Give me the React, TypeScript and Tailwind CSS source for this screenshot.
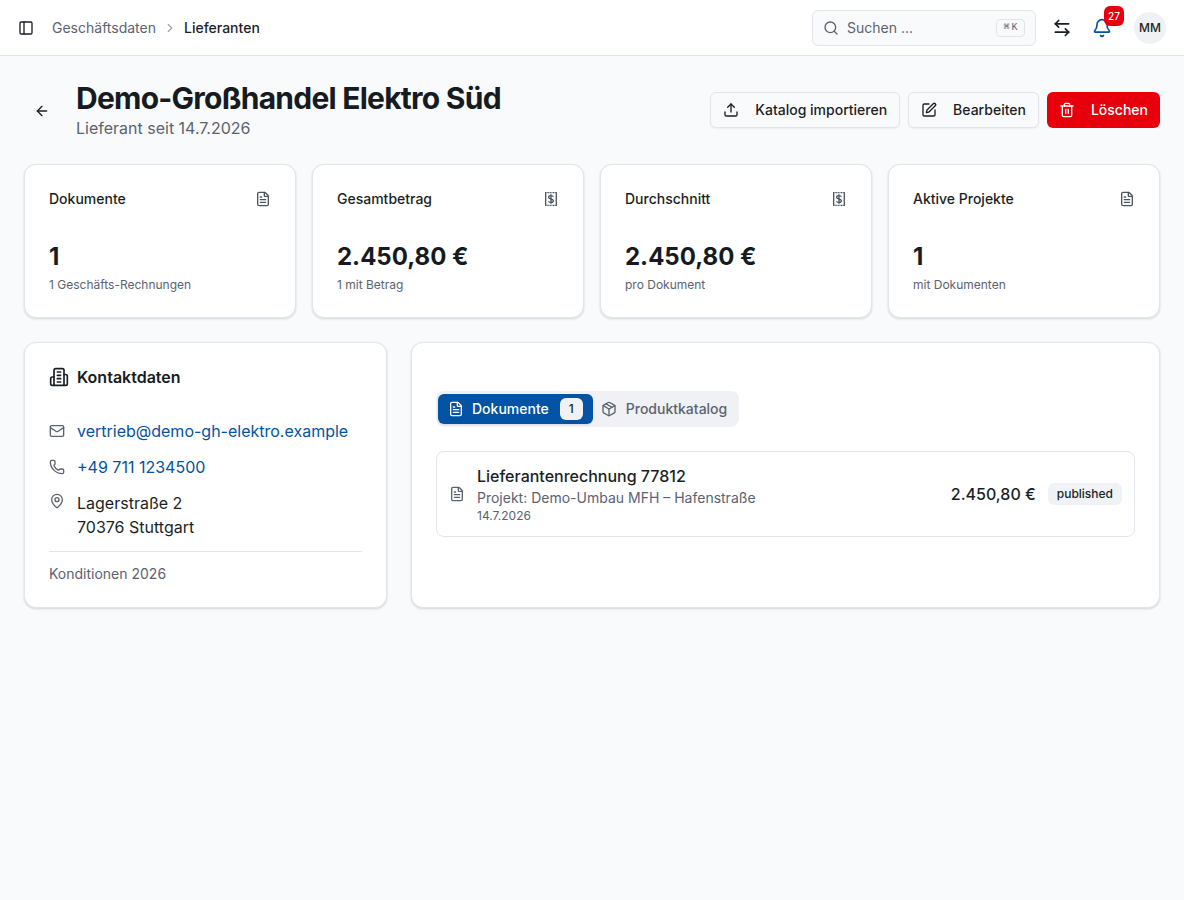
import React from "react";
import { PanelLeft, ChevronRight, ArrowLeft, Upload, SquarePen, Trash2, Search, ArrowLeftRight, Bell, FileText, Mail, Phone, MapPin, Package } from "lucide-react";

function MoneyIcon() {
  return (
    <svg width="16" height="16" viewBox="0 0 16 16" fill="none" stroke="currentColor" className="text-[#4b5563]">
      <path d="M2.700 1.200v13.600M13.300 1.200v13.600" strokeWidth="1.3" />
      <path d="M2 1.700h12M2 14.300h12" strokeWidth="1.300" strokeDasharray="1.100 0.500" />
      <path d="M10.400 5.800C10 5 9.200 4.600 8 4.600c-1.400 0-2.400.7-2.400 1.700 0 2.300 4.800 1.100 4.800 3.400 0 1-1 1.700-2.400 1.700-1.200 0-2-.4-2.400-1.200M8 3.300v9.400" strokeWidth="1.300" />
    </svg>
  );
}

function BuildingIcon() {
  return (
    <svg width="20" height="20" viewBox="0 0 24 24" fill="none" stroke="currentColor" strokeWidth="2" strokeLinecap="round" strokeLinejoin="round">
      <path d="M6 22V4a2 2 0 0 1 2-2h8a2 2 0 0 1 2 2v18Z" />
      <path d="M6 12H4a2 2 0 0 0-2 2v6a2 2 0 0 0 2 2h2" />
      <path d="M18 9h2a2 2 0 0 1 2 2v9a2 2 0 0 1-2 2h-2" />
      <path d="M10 6h4M10 10h4M10 14h4M10 18h4" />
    </svg>
  );
}

function Stat({ title, value, sub, money }: { title: string; value: string; sub: string; money?: boolean }) {
  return (
    <div className="bg-white border border-[#e2e5ea] rounded-xl shadow-[0_1px_3px_rgba(0,0,0,0.1),0_1px_2px_rgba(0,0,0,0.06)] p-6 h-[154px]">
      <div className="flex items-center justify-between h-5">
        <span className="text-sm font-[450] text-[#1a1f26]">{title}</span>
        {money ? <MoneyIcon /> : <FileText size={16} className="text-[#4b5563]" />}
      </div>
      <div className="mt-8 text-2xl leading-8 font-bold text-[#161b22]">{value}</div>
      <div className="mt-[4px] text-xs leading-4 text-[#5b6370]">{sub}</div>
    </div>
  );
}

function ActionButton({ icon, label, danger }: { icon: React.ReactNode; label: string; danger?: boolean }) {
  return (
    <button className={`h-9 flex items-center gap-4 px-3 rounded-md text-sm font-[450] ${danger ? "bg-[#e7000b] text-white" : "border bg-[#f9fafc] border-[#e2e5ea] text-[#1a1f26] shadow-[0_1px_2px_rgba(0,0,0,0.05)]"}`}>
      {icon}
      {label}
    </button>
  );
}

export default function App() {
  return (
    <div className="min-h-[900px] bg-[#f9fafc] text-[#1a1f26] font-['Inter',sans-serif]">
      <header className="h-14 bg-white border-b border-[#e2e5ea] flex items-center pl-[18px] pr-[18px]">
        <PanelLeft size={16} className="text-[#1a1f26]" />
        <nav className="flex items-center ml-[18px] text-sm">
          <span className="text-[#5b6370]">Geschäftsdaten</span>
          <ChevronRight size={14} className="text-[#9aa1ad] mx-[7px]" />
          <span className="font-[450] text-[#1a1f26]">Lieferanten</span>
        </nav>
        <div className="ml-auto flex items-center">
          <div className="w-[224px] h-9 rounded-md border border-[#e2e5ea] bg-[#f9fafc] flex items-center pl-[10px] pr-[10px]">
            <Search size={16} className="text-[#5b6370]" />
            <span className="ml-2 text-sm text-[#5b6370]">Suchen ...</span>
            <kbd className="ml-auto h-[18px] w-[29px] rounded border border-[#e2e5ea] flex items-center justify-center gap-[2px] text-[10px] text-[#5b6370] font-['Liberation_Mono',monospace]">
              <span>⌘</span>
              <span>K</span>
            </kbd>
          </div>
          <ArrowLeftRight size={20} className="ml-4 text-[#1a1f26]" />
          <div className="relative ml-5 w-5 h-5">
            <Bell size={20} className="text-[#0353a4]" />
            <span className="absolute left-[12px] top-[-12px] h-5 min-w-5 px-1 rounded-md bg-[#e7000b] text-white text-[10px] leading-5 font-[450] text-center">27</span>
          </div>
          <div className="ml-[22px] w-8 h-8 rounded-full bg-[#eff1f4] flex items-center justify-center text-xs font-[450] text-[#1a1f26]">MM</div>
        </div>
      </header>

      <main className="px-6 pt-6">
        <div className="flex items-center justify-between">
          <div className="flex items-center">
            <ArrowLeft size={16} className="ml-[10px] mr-[26px] mt-[1px] text-[#1a1f26]" />
            <div>
              <h1 className="text-3xl leading-9 font-bold tracking-tight text-[#161b22]">Demo-Großhandel Elektro Süd</h1>
              <p className="text-base leading-6 text-[#5b6370]">Lieferant seit 14.7.2026</p>
            </div>
          </div>
          <div className="flex items-center gap-2">
            <ActionButton icon={<Upload size={16} />} label="Katalog importieren" />
            <ActionButton icon={<SquarePen size={16} />} label="Bearbeiten" />
            <ActionButton icon={<Trash2 size={16} />} label="Löschen" danger />
          </div>
        </div>

        <div className="grid grid-cols-4 gap-4 mt-6">
          <Stat title="Dokumente" value="1" sub="1 Geschäfts-Rechnungen" />
          <Stat title="Gesamtbetrag" value="2.450,80 €" sub="1 mit Betrag" money />
          <Stat title="Durchschnitt" value="2.450,80 €" sub="pro Dokument" money />
          <Stat title="Aktive Projekte" value="1" sub="mit Dokumenten" />
        </div>

        <div className="flex gap-6 mt-6 items-stretch">
          <section className="w-[363px] h-[266px] shrink-0 bg-white border border-[#e2e5ea] rounded-xl shadow-[0_1px_3px_rgba(0,0,0,0.1),0_1px_2px_rgba(0,0,0,0.06)] px-6 pt-6">
            <div className="flex items-center gap-2 h-5">
              <BuildingIcon />
              <h2 className="text-base font-semibold text-[#161b22]">Kontaktdaten</h2>
            </div>
            <div className="mt-8 flex flex-col gap-3 text-base leading-6">
              <div className="flex items-center gap-3"><Mail size={16} className="text-[#5b6370] shrink-0" /><span className="text-[#0353a4]">vertrieb@demo-gh-elektro.example</span></div>
              <div className="flex items-center gap-3"><Phone size={16} className="text-[#5b6370] shrink-0" /><span className="text-[#0353a4]">+49 711 1234500</span></div>
              <div className="flex items-start gap-3"><MapPin size={16} className="text-[#5b6370] shrink-0 mt-[2px]" /><div>Lagerstraße 2<br />70376 Stuttgart</div></div>
            </div>
            <div className="mt-3 border-t border-[#e2e5ea] pt-3 text-sm leading-5 text-[#5b6370]">Konditionen 2026</div>
          </section>

          <section className="flex-1 h-[266px] bg-white border border-[#e2e5ea] rounded-xl shadow-[0_1px_3px_rgba(0,0,0,0.1),0_1px_2px_rgba(0,0,0,0.06)] px-6 pt-[48px]">
            <div className="inline-flex items-center h-9 rounded-lg bg-[#eff1f4] p-[2px] pr-3">
              <div className="h-[30px] flex items-center gap-2 rounded-md bg-[#0353a4] text-white text-sm font-[450] px-[10px] shadow-[0_1px_2px_rgba(0,0,0,0.1)]">
                <FileText size={16} />
                Dokumente
                <span className="ml-[3px] w-[23px] h-[22px] rounded-md bg-[#eff1f4] text-[#1a1f26] text-xs flex items-center justify-center">1</span>
              </div>
              <div className="flex items-center gap-[9px] text-sm font-[450] text-[#5b6370] pl-2">
                <Package size={16} />
                Produktkatalog
              </div>
            </div>
            <div className="mt-6 h-[86px] border border-[#e2e5ea] rounded-lg flex items-center pl-3 pr-3">
              <FileText size={16} className="text-[#5b6370] shrink-0" />
              <div className="ml-3">
                <div className="text-base leading-6 font-[450] text-[#1a1f26]">Lieferantenrechnung 77812</div>
                <div className="text-sm leading-5 text-[#5b6370]">Projekt: Demo-Umbau MFH – Hafenstraße</div>
                <div className="text-xs leading-4 text-[#5b6370]">14.7.2026</div>
              </div>
              <div className="ml-auto flex items-center gap-3">
                <span className="text-base font-[450] text-[#1a1f26]">2.450,80 €</span>
                <span className="h-[22px] px-[9px] rounded-md bg-[#eff3f8] text-xs font-[450] text-[#1a1f26] flex items-center">published</span>
              </div>
            </div>
          </section>
        </div>
      </main>
    </div>
  );
}
